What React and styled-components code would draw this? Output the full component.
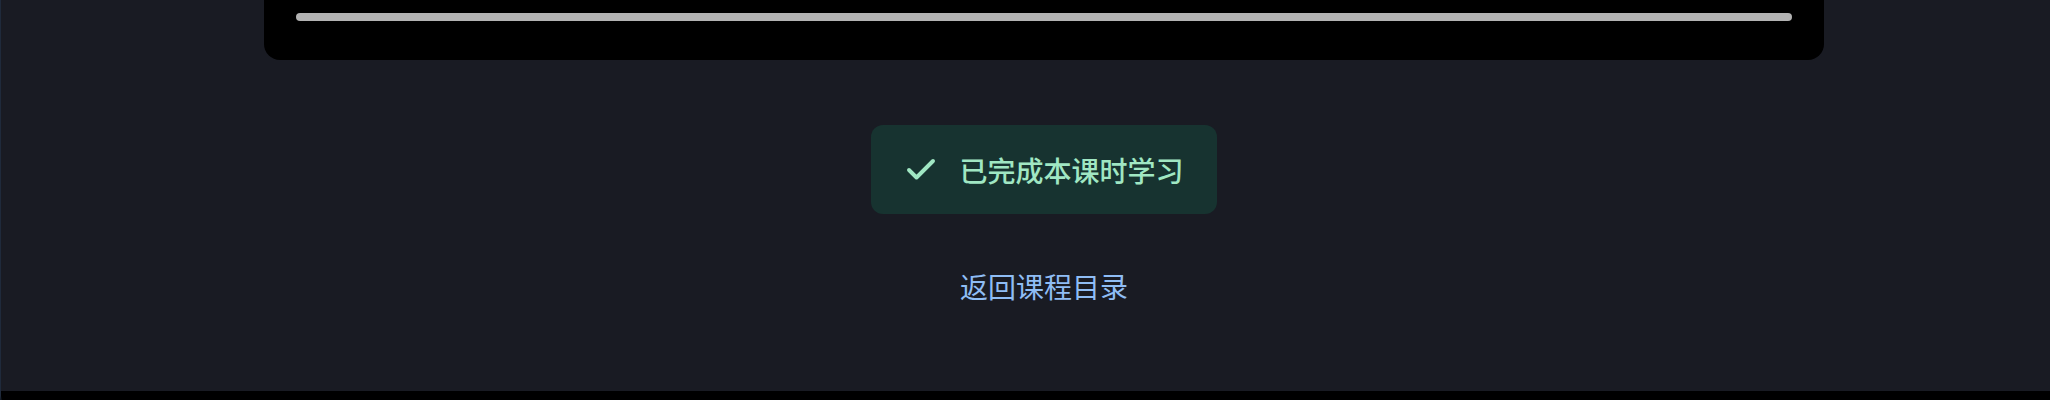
import React from 'react';
import styled, { createGlobalStyle } from 'styled-components';
import { Check } from 'lucide-react';

const GlobalStyle = createGlobalStyle`
  html, body {
    margin: 0;
    padding: 0;
    background: #000;
    overflow: hidden;
  }
  body {
    font-family: "Noto Sans CJK SC", "Noto Sans", sans-serif;
  }
`;

const Frame = styled.div`
  width: 2088px;
  height: 420px;
  box-sizing: border-box;
  border: 1px solid #1f2a3b;
  border-top: none;
  border-radius: 0 0 24px 24px;
  overflow: hidden;
  background: #000;
`;

const Panel = styled.main`
  height: 391px;
  background: #191b23;
  display: flex;
  flex-direction: column;
  align-items: center;
`;

const Player = styled.div`
  width: 1560px;
  box-sizing: border-box;
  background: #000;
  border-radius: 0 0 16px 16px;
  padding: 13px 32px 39px;
`;

const Scrubber = styled.div`
  height: 8px;
  border-radius: 4px;
  background: #b3b3b3;
`;

const DoneBadge = styled.div`
  margin-top: 65px;
  display: flex;
  align-items: center;
  gap: 20px;
  height: 89px;
  box-sizing: border-box;
  padding: 0 33px 0 32px;
  border-radius: 12px;
  background: #173330;
  color: #a0e7c3;
  font-size: 28px;
  line-height: 40px;
  font-weight: 500;

  svg {
    flex-shrink: 0;
  }
`;

const BackLink = styled.a`
  margin-top: 52px;
  font-size: 28px;
  line-height: 40px;
  color: #8fbdf5;
  text-decoration: none;
  cursor: pointer;
`;

export default function App() {
  return (
    <>
      <GlobalStyle />
      <Frame>
        <Panel>
          <Player>
            <Scrubber />
          </Player>
          <DoneBadge>
            <Check size={36} strokeWidth={2.6} />
            <span>已完成本课时学习</span>
          </DoneBadge>
          <BackLink href="#">返回课程目录</BackLink>
        </Panel>
      </Frame>
    </>
  );
}
